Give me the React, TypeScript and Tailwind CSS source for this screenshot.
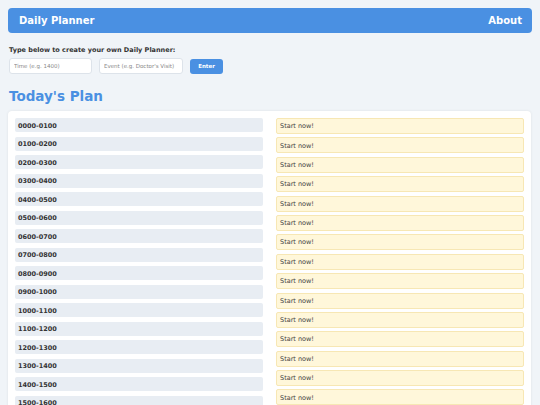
import { useState } from "react";

const hours = Array.from({ length: 24 }, (_, i) => {
    const pad = (n: number) => String(n).padStart(2, "0") + "00";
    return `${pad(i)}-${pad(i + 1)}`;
});

export default function App() {
    const [time, setTime] = useState("");
    const [event, setEvent] = useState("");

    return (
        <div className="min-h-screen bg-[#f0f4f8] px-2 pt-2 text-[#333] font-['DejaVu_Sans',sans-serif]">
            <header className="flex h-[25px] items-center justify-between rounded-[4px] bg-[#4a90e2] pl-[11px] pr-[10px] text-[10px] font-bold text-white">
                <span>Daily Planner</span>
                <span>About</span>
            </header>

            <div className="mt-[13px] pl-px">
                <p className="text-[6.5px] font-bold leading-[8px]">Type below to create your own Daily Planner:</p>
                <div className="mt-[4px] flex items-center gap-[7px]">
                    <input
                        value={time}
                        onChange={e => setTime(e.target.value)}
                        placeholder="Time (e.g. 1400)"
                        className="h-[16px] w-[83px] rounded-[3px] border border-[#dde3ea] bg-white px-[4px] text-[5.5px] placeholder:text-[#888] outline-none"
                    />
                    <input
                        value={event}
                        onChange={e => setEvent(e.target.value)}
                        placeholder="Event (e.g. Doctor's Visit)"
                        className="h-[16px] w-[84px] rounded-[3px] border border-[#dde3ea] bg-white px-[4px] text-[5.5px] placeholder:text-[#888] outline-none"
                    />
                    <button className="h-[15px] w-[33px] rounded-[3px] bg-[#4a90e2] text-[5.5px] font-bold text-white">
                        Enter
                    </button>
                </div>
            </div>

            <h1 className="mt-[13px] pl-px text-[13.5px] font-bold leading-[18px] text-[#4a90e2]">Today's Plan</h1>

            <div className="mt-[6px] mr-px rounded-[4px] bg-white p-[7px] shadow-[0_0_3px_rgba(0,0,0,0.08)]">
                <div className="grid grid-cols-2 gap-x-[13px]">
                    <div className="flex flex-col gap-[4.5px]">
                        {hours.map(h => (
                            <div key={h} className="flex h-[14px] items-center rounded-[2px] bg-[#e8edf3] pl-[3px] pt-[3px] text-[6.5px] font-bold">
                                {h}
                            </div>
                        ))}
                    </div>
                    <div className="flex flex-col gap-[3.4px]">
                        {hours.map(h => (
                            <div key={h} className="flex h-[16px] items-center rounded-[2px] border border-[#f7e7b4] bg-[#fff7da] pl-[3px] pt-[2px] text-[6.5px] text-[#444]">
                                Start now!
                            </div>
                        ))}
                    </div>
                </div>
            </div>
        </div>
    );
}
